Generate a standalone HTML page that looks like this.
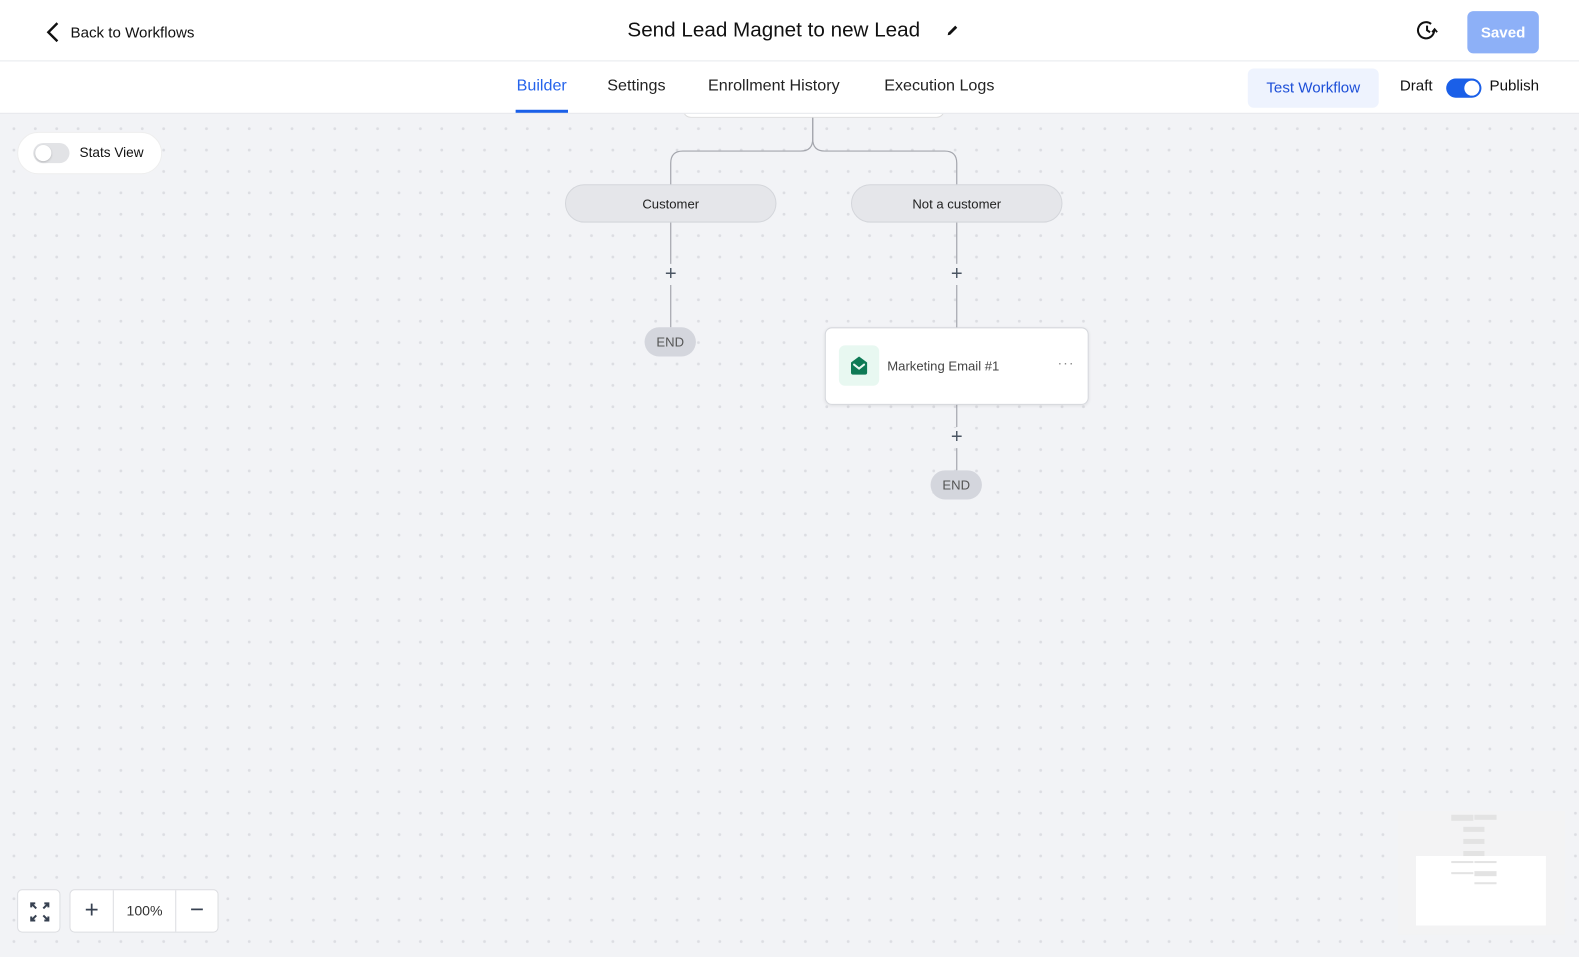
<!DOCTYPE html>
<html><head><meta charset="utf-8"><style>
*{box-sizing:border-box;margin:0;padding:0}
body{width:1579px;height:950px;overflow:hidden;font-family:"Liberation Sans",sans-serif;background:#f2f3f6;position:relative;color:#111}
.canvas{position:absolute;left:0;top:113px;width:1579px;height:837px;background-color:#f2f3f6;background-image:radial-gradient(circle,#dcdde2 1.3px,transparent 1.6px);background-size:21.4px 21.4px;background-position:538px 5px}
.wrap{position:absolute;left:0;top:0;width:1568px;height:943px;transform:scale(1.0071);transform-origin:0 0}
.top{position:absolute;left:0;top:0;width:1579px;height:61px;background:#fff;border-bottom:1px solid #e5e7eb}
.tabs{position:absolute;left:0;top:61px;width:1579px;height:52px;background:#fff;border-bottom:1px solid #e5e7eb}
.abs{position:absolute}
.tab{position:absolute;top:77px;font-size:16px;color:#222}
.pill{position:absolute;height:38px;border-radius:19px;background:#e5e6ea;border:1px solid #d4d6db;font-size:13px;display:flex;align-items:center;justify-content:center;color:#222}
.end{position:absolute;width:51px;height:29px;border-radius:15px;background:#d4d6dd;font-size:13px;color:#555;display:flex;align-items:center;justify-content:center}
.plus{position:absolute;font-size:20px;color:#4b5563;width:20px;text-align:center;background:#f2f3f6;line-height:18px}
</style></head><body>
<div class="canvas"></div>
<div class="wrap">
<svg class="abs" style="left:0;top:0" width="1579" height="950">
<g fill="none" stroke="#a4a6ad" stroke-width="1.2">
<path d="M807 113 V138 Q807 150 795 150 H678 Q666 150 666 162 V184"/>
<path d="M807 113 V138 Q807 150 819 150 H938 Q950 150 950 162 V184"/>
<path d="M666 220 V262 M666 283 V325"/>
<path d="M950 220 V262 M950 283 V326"/>
<path d="M950 401 V424 M950 445 V467"/>
</g>
</svg>
<div class="abs" style="left:678px;top:100px;width:260px;height:17px;background:#fff;border:1px solid #ddd;border-top:none;border-radius:0 0 8px 8px"></div>
<div class="pill" style="left:561px;top:183px;width:210px">Customer</div>
<div class="pill" style="left:845px;top:183px;width:210px">Not a customer</div>
<div class="plus" style="left:656px;top:263px">+</div>
<div class="plus" style="left:940px;top:263px">+</div>
<div class="plus" style="left:940px;top:425px">+</div>
<div class="end" style="left:640px;top:325px">END</div>
<div class="end" style="left:924px;top:467px">END</div>
<div class="abs" style="left:819px;top:325px;width:262px;height:77px;background:#fff;border:1px solid #d6d8dd;border-radius:7px;box-shadow:0 1px 3px rgba(0,0,0,.08)">
 <div class="abs" style="left:13px;top:17px;width:40px;height:40px;border-radius:6px;background:#e8f8f1">
  <svg width="40" height="40"><path d="M12 17 L20 11 L28 17 V27 Q28 29 26 29 H14 Q12 29 12 27 Z" fill="#0e7a55"/><path d="M15 19 L20 23 L25 19" stroke="#e8f8f1" stroke-width="2" fill="none" stroke-linecap="round"/></svg>
 </div>
 <div class="abs" style="left:61px;top:30px;font-size:13px;color:#444">Marketing Email #1</div>
 <div class="abs" style="left:230px;top:26px;font-size:14px;color:#888;letter-spacing:1px">···</div>
</div>
<div class="top">
 <svg class="abs" style="left:44px;top:21px" width="16" height="22"><path d="M13 2 L4 11 L13 20" stroke="#111" stroke-width="2.4" fill="none"/></svg>
 <div class="abs" style="left:70px;top:24px;font-size:15px">Back to Workflows</div>
 <div class="abs" style="left:623px;top:18px;font-size:20.5px">Send Lead Magnet to new Lead</div>
 <svg class="abs" style="left:938px;top:22px" width="16" height="16"><path d="M3 13 L3.5 10.5 L10.5 3.5 L12.5 5.5 L5.5 12.5 Z" fill="#111"/></svg>
 <svg class="abs" style="left:1406px;top:19px" width="22" height="22"><path d="M18 11 A8 8 0 1 1 15 4.8" stroke="#111" stroke-width="2" fill="none"/><path d="M11 6.5 V11 L14 13" stroke="#111" stroke-width="2" fill="none"/><path d="M16 13 L18.5 10 L21 13" stroke="#111" stroke-width="1.8" fill="none"/></svg>
 <div class="abs" style="left:1457px;top:11px;width:71px;height:42px;border-radius:6px;background:#8db0f7;color:#fff;font-weight:bold;font-size:15px;display:flex;align-items:center;justify-content:center">Saved</div>
</div>
<div class="tabs">
 <div class="abs" style="left:1239px;top:7px;width:130px;height:39px;border-radius:6px;background:#eef3fe;color:#1d4fd8;font-size:15px;display:flex;align-items:center;justify-content:center">Test Workflow</div>
 <div class="abs" style="left:1390px;top:16px;font-size:15px">Draft</div>
 <div class="abs" style="left:1436px;top:17px;width:35px;height:19px;border-radius:10px;background:#1a5fe8"><div class="abs" style="left:18px;top:2px;width:15px;height:15px;border-radius:50%;background:#fff"></div></div>
 <div class="abs" style="left:1479px;top:16px;font-size:15px">Publish</div>
 <div class="abs" style="left:512px;top:48px;width:52px;height:3px;background:#1a5fe8"></div>
</div>
<div class="tab" style="left:513px;color:#2563eb">Builder</div>
<div class="tab" style="left:603px">Settings</div>
<div class="tab" style="left:703px">Enrollment History</div>
<div class="tab" style="left:878px">Execution Logs</div>
<div class="abs" style="left:17px;top:131px;width:144px;height:42px;border-radius:21px;background:#fff;border:1px solid #eee">
 <div class="abs" style="left:15px;top:10px;width:36px;height:20px;border-radius:10px;background:#e2e3e6"><div class="abs" style="left:2px;top:2px;width:16px;height:16px;border-radius:50%;background:#fff;box-shadow:0 1px 2px rgba(0,0,0,.2)"></div></div>
 <div class="abs" style="left:61px;top:12px;font-size:13.5px">Stats View</div>
</div>
<div class="abs" style="left:17px;top:883px;width:43px;height:43px;background:#fff;border:1px solid #dcdde1;border-radius:5px">
 <svg width="43" height="43"><g stroke="#374151" stroke-width="2" fill="none"><path d="M13 17 V13 H17 M13 13 L18 18"/><path d="M30 17 V13 H26 M30 13 L25 18"/><path d="M13 26 V30 H17 M13 30 L18 25"/><path d="M30 26 V30 H26 M30 30 L25 25"/></g></svg>
</div>
<div class="abs" style="left:69px;top:883px;width:148px;height:43px;background:#fff;border:1px solid #dcdde1;border-radius:5px;display:flex">
 <div style="width:43px;border-right:1px solid #dcdde1;text-align:center;font-size:24px;line-height:40px;color:#374151">+</div>
 <div style="width:62px;border-right:1px solid #dcdde1;text-align:center;font-size:14px;line-height:41px;color:#333">100%</div>
 <div style="flex:1;text-align:center;font-size:24px;line-height:40px;color:#374151">−</div>
</div>
<div class="abs" style="left:1388px;top:805px;width:166px;height:123px;background:#f3f3f4">
 <div class="abs" style="left:18px;top:45px;width:129px;height:69px;background:#fff"></div>
 <div class="abs" style="left:53px;top:4px;width:22px;height:6px;background:#e3e3e3"></div>
 <div class="abs" style="left:76px;top:4px;width:22px;height:5px;background:#e3e3e3"></div>
 <div class="abs" style="left:65px;top:16px;width:21px;height:5px;background:#e3e3e3"></div>
 <div class="abs" style="left:65px;top:28px;width:21px;height:5px;background:#e3e3e3"></div>
 <div class="abs" style="left:65px;top:40px;width:21px;height:5px;background:#e3e3e3"></div>
 <div class="abs" style="left:53px;top:50px;width:22px;height:2px;background:#e3e3e3"></div>
 <div class="abs" style="left:76px;top:50px;width:22px;height:2px;background:#e3e3e3"></div>
 <div class="abs" style="left:53px;top:61px;width:22px;height:2px;background:#e3e3e3"></div>
 <div class="abs" style="left:76px;top:60px;width:22px;height:5px;background:#e3e3e3"></div>
 <div class="abs" style="left:76px;top:71px;width:22px;height:2px;background:#e3e3e3"></div>
</div>
</div>
</body></html>
